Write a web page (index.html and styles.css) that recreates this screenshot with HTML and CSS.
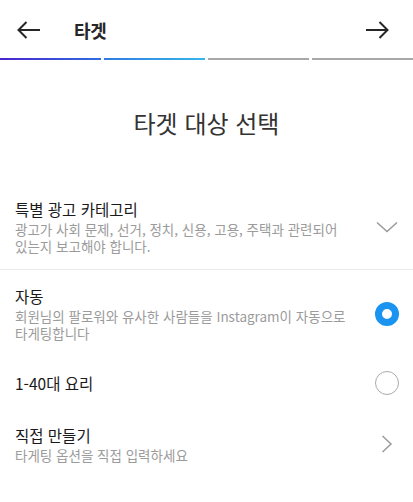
FILE: index.html
```html
<!DOCTYPE html>
<html lang="ko">
<head>
<meta charset="utf-8">
<link rel="stylesheet" href="styles.css">
</head>
<body>
<div class="screen">
  <header class="topbar">
    <svg class="nav-icon" width="24" height="24" viewBox="0 0 24 24"><path d="M23 12H1.5M9.5 4L1.5 12L9.5 20" fill="none" stroke="#262626" stroke-width="2" stroke-linejoin="miter"/></svg>
    <span class="topbar-title">타겟</span>
    <span class="spacer"></span>
    <svg class="nav-icon" width="24" height="24" viewBox="0 0 24 24"><path d="M1 12H22.5M14.5 4L22.5 12L14.5 20" fill="none" stroke="#262626" stroke-width="2"/></svg>
  </header>
  <div class="progress">
    <span class="seg seg1"></span>
    <span class="seg seg2"></span>
    <span class="seg"></span>
    <span class="seg"></span>
  </div>
  <h1 class="heading">타겟 대상 선택</h1>
  <div class="row row-border">
    <div class="text">
      <div class="title">특별 광고 카테고리</div>
      <div class="desc">광고가 사회 문제, 선거, 정치, 신용, 고용, 주택과 관련되어 있는지 보고해야 합니다.</div>
    </div>
    <div class="icon">
      <svg width="22" height="12" viewBox="0 0 22 12"><path d="M1 1.5L11 10.5L21 1.5" fill="none" stroke="#9a9a9a" stroke-width="1.5"/></svg>
    </div>
  </div>
  <div class="row">
    <div class="text">
      <div class="title">자동</div>
      <div class="desc">회원님의 팔로워와 유사한 사람들을 Instagram이 자동으로 타게팅합니다</div>
    </div>
    <div class="icon"><span class="radio radio-on"></span></div>
  </div>
  <div class="row">
    <div class="text">
      <div class="title">1-40대 요리</div>
    </div>
    <div class="icon"><span class="radio"></span></div>
  </div>
  <div class="row">
    <div class="text">
      <div class="title">직접 만들기</div>
      <div class="desc">타게팅 옵션을 직접 입력하세요</div>
    </div>
    <div class="icon">
      <svg width="12" height="18" viewBox="0 0 12 18"><path d="M1.5 1L10 9L1.5 17" fill="none" stroke="#9a9a9a" stroke-width="1.5"/></svg>
    </div>
  </div>
</div>
</body>
</html>
```
FILE: styles.css
```css
* { box-sizing: border-box; }
html, body { margin: 0; padding: 0; background: #fff; }
body {
  font-family: "Noto Sans CJK KR", "Noto Sans", Roboto, sans-serif;
  color: #262626;
}
.screen { width: 413px; }
.topbar {
  height: 58px;
  display: flex;
  align-items: center;
  padding: 2px 24px 0 17px;
}
.nav-icon { display: block; flex: none; }
.topbar-title {
  margin-left: 33px;
  font-size: 18px;
  font-weight: 700;
  letter-spacing: -0.3px;
}
.spacer { flex: 1; }
.progress {
  display: flex;
  gap: 3px;
  height: 2px;
}
.seg { flex: 1; background: #a8a8a8; }
.seg1 { background: linear-gradient(90deg, #4a24cf, #2f6ee0); }
.seg2 { background: linear-gradient(90deg, #2f7be2, #37b6ea); }
.heading {
  margin: 46px 0 43px;
  text-align: center;
  font-size: 24px;
  line-height: 34px;
  font-weight: 400;
  color: #333;
}
.row {
  display: flex;
  align-items: center;
  padding: 15px 14px 14px 15px;
}
.row-border { border-bottom: 1px solid #ececec; }
.text { flex: 1; min-width: 0; padding-right: 12px; word-break: keep-all; }
.title {
  font-size: 15.5px;
  line-height: 22px;
  font-weight: 400;
  color: #1a1a1a;
}
.desc {
  margin-top: 1px;
  font-size: 13.5px;
  line-height: 17px;
  color: #9b9b9b;
}
.icon {
  width: 24px;
  flex: none;
  display: flex;
  justify-content: center;
  align-items: center;
}
.radio {
  display: block;
  width: 24px;
  height: 24px;
  border-radius: 50%;
  border: 1.5px solid #aaaaaa;
}
.radio-on { border: 7px solid #1a94f0; }
```
